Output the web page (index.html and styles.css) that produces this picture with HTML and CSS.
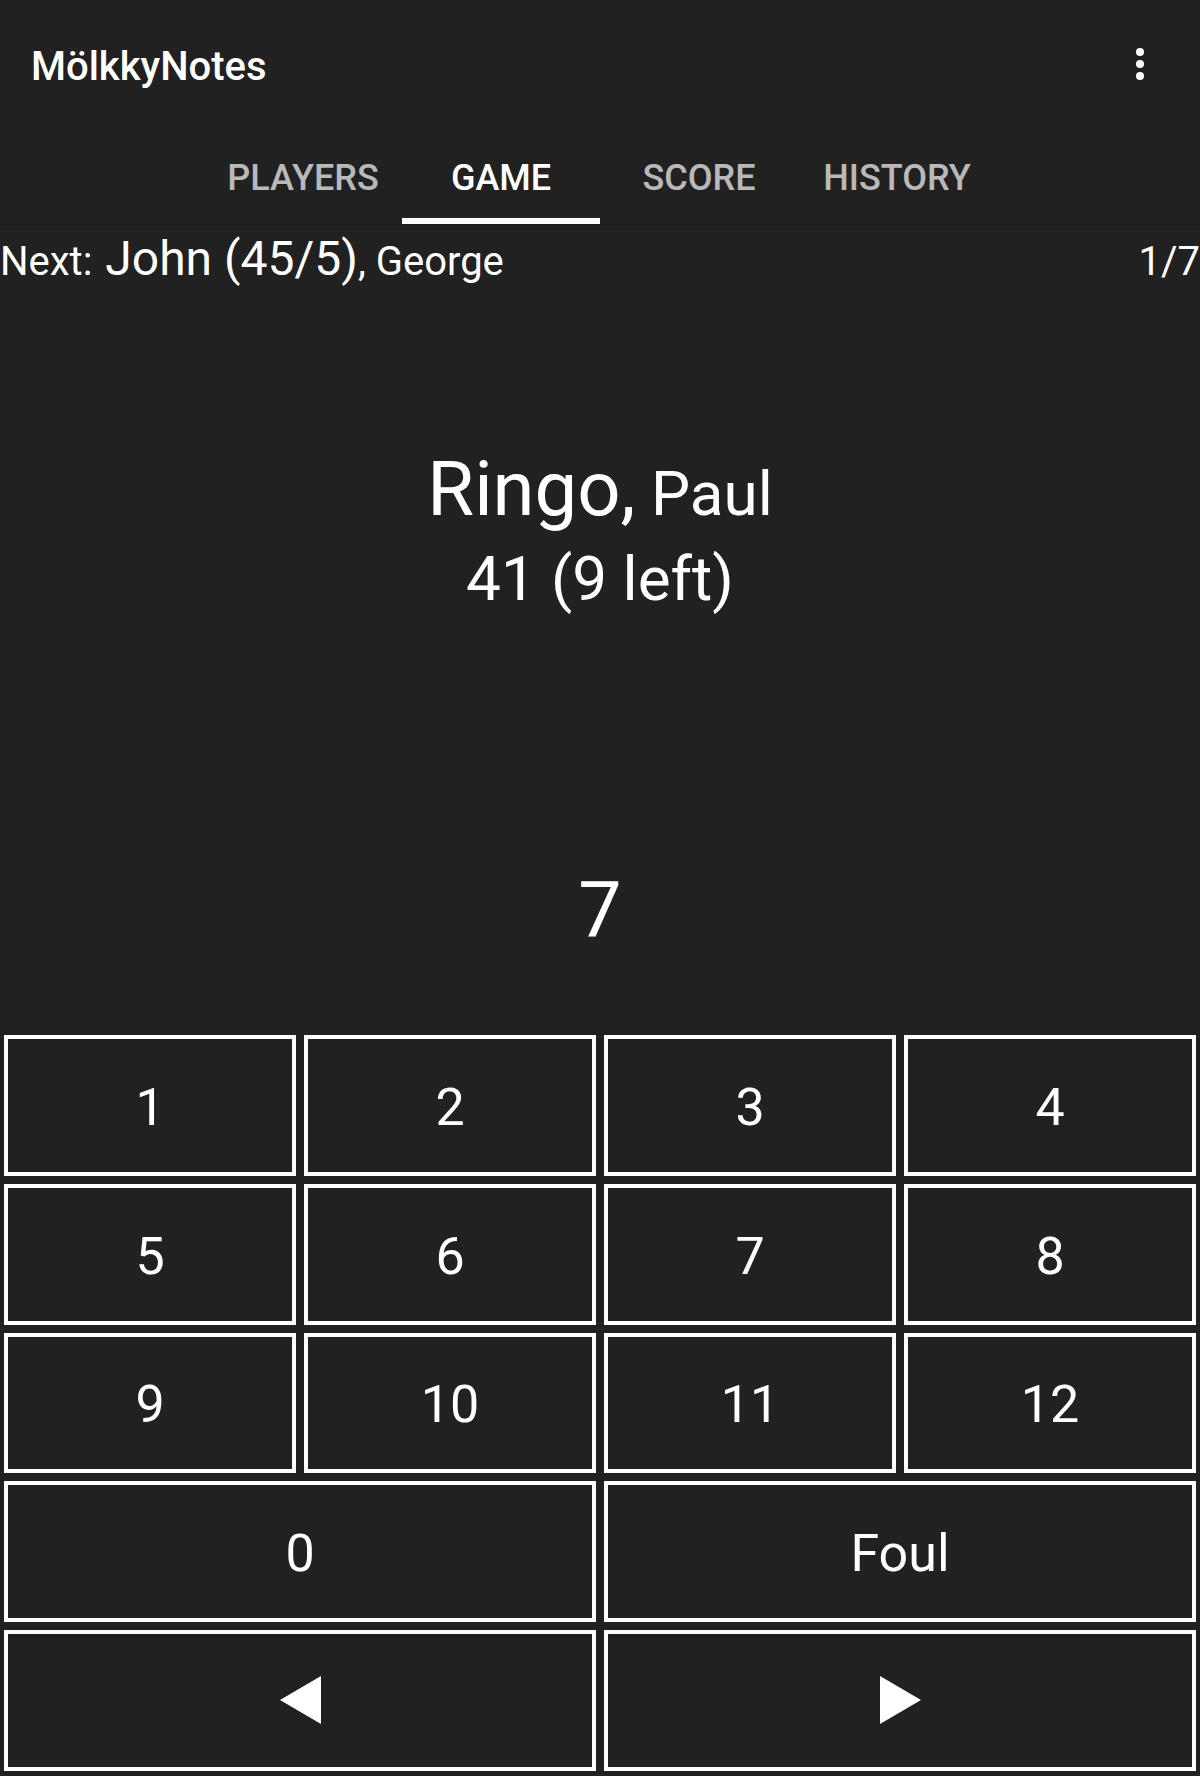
FILE: index.html
```html
<!DOCTYPE html>
<html lang="en">
<head>
<meta charset="utf-8">
<title>MölkkyNotes</title>
<link rel="stylesheet" href="styles.css">
</head>
<body>
<div class="app">
  <header class="appbar">
    <div class="toolbar">
      <div class="title">MölkkyNotes</div>
      <svg class="more" viewBox="0 0 24 24" width="48" height="48" aria-label="More options">
        <circle cx="12" cy="6" r="2"/>
        <circle cx="12" cy="12" r="2"/>
        <circle cx="12" cy="18" r="2"/>
      </svg>
    </div>
    <nav class="tabs">
      <div class="tab"><span class="tab-label">PLAYERS</span></div>
      <div class="tab active"><span class="tab-label">GAME</span><span class="indicator"></span></div>
      <div class="tab"><span class="tab-label">SCORE</span></div>
      <div class="tab"><span class="tab-label">HISTORY</span></div>
    </nav>
  </header>

  <main class="game">
    <div class="next">
      <div class="next-list">
        <span class="next-label">Next: </span><span class="next-major">John (45/5)</span><span class="next-minor">, George</span>
      </div>
      <div class="next-count">1/7</div>
    </div>

    <div class="current">
      <div class="cur-name">Ringo,<span class="cur-minor"> Paul</span></div>
      <div class="cur-score">41 (9 left)</div>
    </div>

    <div class="throw">7</div>

    <div class="pad">
      <button class="key">1</button>
      <button class="key">2</button>
      <button class="key">3</button>
      <button class="key">4</button>
      <button class="key">5</button>
      <button class="key">6</button>
      <button class="key">7</button>
      <button class="key">8</button>
      <button class="key">9</button>
      <button class="key">10</button>
      <button class="key">11</button>
      <button class="key">12</button>
      <button class="key wide">0</button>
      <button class="key wide">Foul</button>
      <button class="key wide" aria-label="Previous">
        <svg class="arrow" viewBox="0 0 41 48" width="41" height="48"><polygon points="41,0 41,48 0,24"/></svg>
      </button>
      <button class="key wide" aria-label="Next">
        <svg class="arrow" viewBox="0 0 41 48" width="41" height="48"><polygon points="0,0 41,24 0,48"/></svg>
      </button>
    </div>
  </main>
</div>
</body>
</html>
```

FILE: styles.css
```css
* {
  box-sizing: border-box;
}

html, body {
  margin: 0;
  padding: 0;
  background: #212121;
}

body {
  width: 1200px;
  height: 1776px;
  overflow: hidden;
  font-family: Roboto, "Noto Sans", "Liberation Sans", sans-serif;
  color: #ffffff;
}

.app {
  width: 1200px;
  height: 1776px;
}

/* ---------- App bar ---------- */
.appbar {
  background: #212121;
  position: relative;
  box-shadow: 0 1px 2px rgba(0, 0, 0, 0.25);
}

.toolbar {
  height: 128px;
  display: flex;
  justify-content: space-between;
  align-items: flex-start;
  padding: 0 36px 0 31px;
}

.title {
  margin-top: 47px;
  font-size: 40px;
  line-height: 40px;
  font-weight: 500;
  color: #ffffff;
}

.more {
  margin-top: 40px;
  fill: #ffffff;
  display: block;
}

.tabs {
  height: 96px;
  display: flex;
  justify-content: center;
}

.tab {
  width: 198px;
  height: 96px;
  display: flex;
  flex-direction: column;
  align-items: center;
}

.tab-label {
  margin-top: 32px;
  font-size: 36px;
  line-height: 36px;
  font-weight: 500;
  color: rgba(255, 255, 255, 0.7);
}

.tab.active .tab-label {
  color: #ffffff;
}

.indicator {
  margin-top: auto;
  width: 100%;
  height: 6px;
  background: #ffffff;
}

/* ---------- Game area ---------- */
.game {
  display: flex;
  flex-direction: column;
}

.next {
  margin-top: 11px;
  display: flex;
  justify-content: space-between;
  align-items: baseline;
  line-height: 1;
}

.next-list {
  display: flex;
  align-items: baseline;
  white-space: pre;
}

.next-label {
  font-size: 40px;
}

.next-major {
  font-size: 48px;
  margin-left: 3px;
}

.next-minor {
  font-size: 40px;
}

.next-count {
  font-size: 40px;
}

.current {
  margin-top: 168px;
  text-align: center;
}

.cur-name {
  font-size: 76px;
  line-height: 1;
}

.cur-minor {
  font-size: 62px;
  line-height: 1;
}

.cur-score {
  margin-top: 21px;
  font-size: 62px;
  line-height: 1;
}

.throw {
  margin-top: 263px;
  text-align: center;
  font-size: 77px;
  line-height: 1;
}

/* ---------- Key pad ---------- */
.pad {
  margin-top: 85px;
  padding: 0 4px;
  display: grid;
  grid-template-columns: repeat(4, 1fr);
  grid-auto-rows: 140.75px;
  gap: 8px;
}

.key {
  margin: 0;
  padding: 4px 0 0 0;
  border: 4px solid #ffffff;
  border-radius: 0;
  background: #212121;
  color: #ffffff;
  font-family: Roboto, "Noto Sans", "Liberation Sans", sans-serif;
  font-size: 52px;
  font-weight: 400;
  display: flex;
  align-items: center;
  justify-content: center;
}

.key.wide {
  grid-column: span 2;
}

.arrow {
  display: block;
  fill: #ffffff;
  margin-top: -4px;
}
```
